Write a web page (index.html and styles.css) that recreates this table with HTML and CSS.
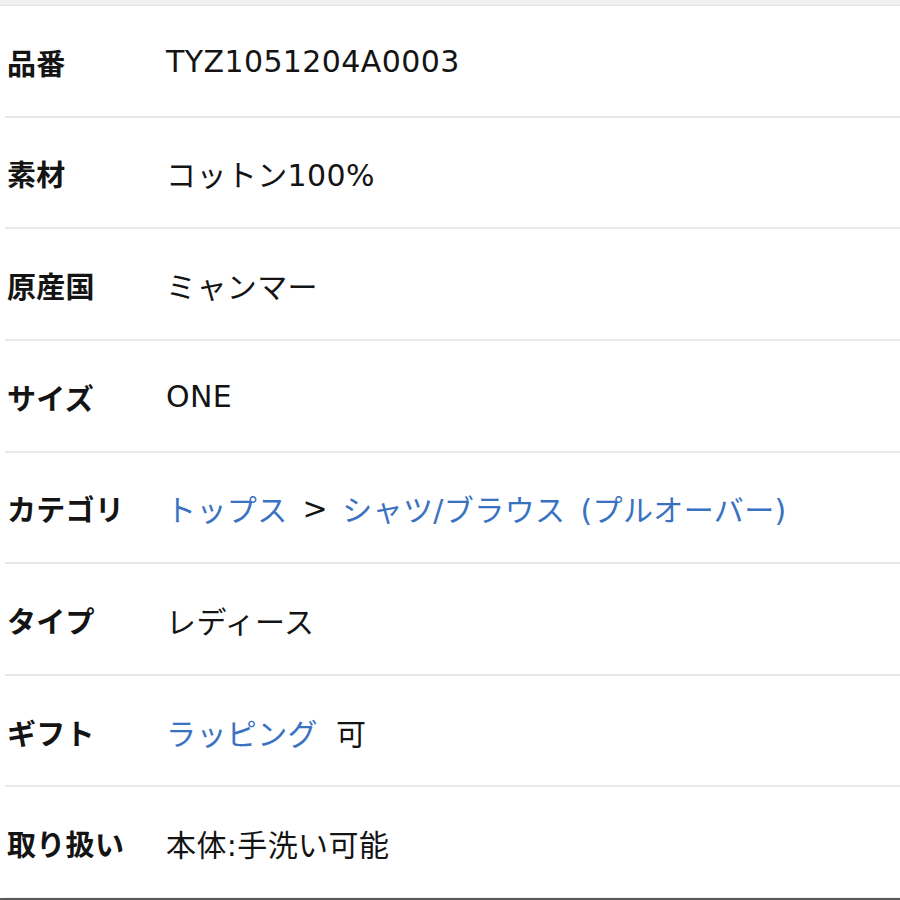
FILE: index.html
```html
<!DOCTYPE html>
<html lang="ja">
<head>
<meta charset="utf-8">
<title>商品詳細</title>
<link rel="stylesheet" href="styles.css">
</head>
<body>
<div class="topband"></div>
<dl class="spec">
  <div class="row"><dt>品番</dt><dd>TYZ1051204A0003</dd></div>
  <div class="row"><dt>素材</dt><dd>コットン100%</dd></div>
  <div class="row"><dt>原産国</dt><dd>ミャンマー</dd></div>
  <div class="row"><dt>サイズ</dt><dd>ONE</dd></div>
  <div class="row"><dt>カテゴリ</dt><dd><a class="link" href="#">トップス</a><span class="sep">&gt;</span><a class="link" href="#">シャツ/ブラウス (プルオーバー)</a></dd></div>
  <div class="row"><dt>タイプ</dt><dd>レディース</dd></div>
  <div class="row"><dt>ギフト</dt><dd><a class="link" href="#">ラッピング</a><span class="after">可</span></dd></div>
  <div class="row"><dt>取り扱い</dt><dd>本体:手洗い可能</dd></div>
</dl>
<div class="bottomline"></div>
</body>
</html>
```
FILE: styles.css
```css
html, body {
  margin: 0;
  padding: 0;
  background: #ffffff;
}
body {
  font-family: "Noto Sans CJK JP", "Noto Sans", sans-serif;
  color: #141414;
  height: 900px;
  overflow: hidden;
  display: flex;
  flex-direction: column;
}
.topband {
  height: 5px;
  background: #f0f0f0;
  border-bottom: 1px solid #e2e2e2;
  flex: none;
}
.spec {
  margin: 0 0 0 5px;
  padding: 0;
  flex: 1;
  display: flex;
  flex-direction: column;
}
.row {
  flex: 1;
  display: flex;
  align-items: center;
  border-bottom: 2px solid #e8e8e8;
  padding-left: 2px;
  padding-top: 2px;
}
.row:last-child {
  border-bottom: 1px solid #ececec;
}
dt {
  width: 161px;
  flex: none;
  font-weight: 700;
  font-size: 29px;
  letter-spacing: 0.3px;
}
dd {
  margin: 0;
  margin-left: -2px;
  font-family: "DejaVu Sans", "Noto Sans CJK JP", sans-serif;
  font-size: 30px;
  font-weight: 400;
  letter-spacing: 0.4px;
  word-spacing: 5px;
  display: flex;
  align-items: center;
}
.link {
  color: #3a72c2;
  text-decoration: none;
}
.sep {
  margin: 0 14px 0 15px;
  color: #141414;
}
.after {
  margin-left: 18px;
}
.bottomline {
  height: 2px;
  background: #5a5a5a;
  flex: none;
}
```
